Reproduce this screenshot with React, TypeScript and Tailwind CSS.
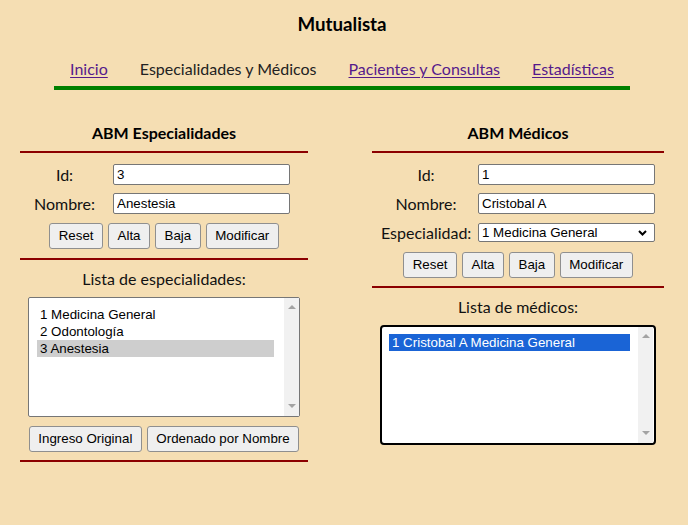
import React from "react";

const arial = "font-['Liberation_Sans',Arial,sans-serif] text-[13.33px]";

function Btn({ children }: { children: React.ReactNode }) {
  return (
    <button
      className={`${arial} h-[26px] px-[8.5px] border border-[#8f8f8f] rounded-[3px] bg-[#efefef] text-black leading-none`}
    >
      {children}
    </button>
  );
}

function TextBox({ value }: { value: string }) {
  return (
    <input
      readOnly
      value={value}
      className={`${arial} h-[21px] w-[177px] border border-[#767676] rounded-[2px] bg-white px-[3px] text-black outline-none`}
    />
  );
}

function FakeScroll() {
  return (
    <div className="w-[15px] bg-[#f1f1f1] flex flex-col justify-between items-center pt-[7px] pb-[8px]">
      <svg width="8" height="4" viewBox="0 0 8 4">
        <path d="M0 4 L4 0 L8 4Z" fill="#a3a3a3" />
      </svg>
      <svg width="8" height="4" viewBox="0 0 8 4">
        <path d="M0 0 L4 4 L8 0Z" fill="#a3a3a3" />
      </svg>
    </div>
  );
}

function Rule({ className = "" }: { className?: string }) {
  return <div className={`h-[2px] bg-[#8b0000] ${className}`} />;
}

export default function App() {
  return (
    <div className="min-h-screen w-full bg-[#f5deb3] font-['Lato',sans-serif] text-[#111]">
      <div className="w-[684px] pt-[12px]">
        <h1 className="text-center text-[18.72px] font-bold leading-[24px] text-black">Mutualista</h1>
        <div className="flex justify-center mt-[23px]">
          <nav className="flex border-b-4 border-[#008000] text-[16px] leading-[20px]">
            <a className="px-4 pb-[7px] text-[#551a8b] underline underline-offset-2">Inicio</a>
            <span className="px-4 pb-[7px] text-[#222]">Especialidades y Médicos</span>
            <a className="px-4 pb-[7px] text-[#551a8b] underline underline-offset-2">Pacientes y Consultas</a>
            <a className="px-4 pb-[7px] text-[#551a8b] underline underline-offset-2">Estadísticas</a>
          </nav>
        </div>

        <div className="flex pl-[20px] gap-[64px] mt-[33px]">
          {/* Left column */}
          <div className="w-[288px] flex flex-col">
            <h2 className="text-center text-[16px] font-bold leading-[20px] text-black">ABM Especialidades</h2>
            <Rule className="mt-[8px]" />
            <div className="mt-[11px] ml-[13px] grid grid-cols-[63px_177px] gap-x-[17px] gap-y-[8px] items-center text-[16px] leading-[21px]">
              <span className="text-center">Id:</span>
              <TextBox value="3" />
              <span className="text-center">Nombre:</span>
              <TextBox value="Anestesia" />
            </div>
            <div className="mt-[9px] flex justify-center gap-[5px]">
              <Btn>Reset</Btn>
              <Btn>Alta</Btn>
              <Btn>Baja</Btn>
              <Btn>Modificar</Btn>
            </div>
            <Rule className="mt-[9px]" />
            <div className="mt-[9px] text-center text-[16px] leading-[20px]">Lista de especialidades:</div>
            <div className="mt-[8px] mx-[8px] h-[120px] border border-[#767676] rounded-[2px] bg-white flex">
              <div className={`${arial} flex-1 pl-[8px] pt-[8px] pr-[10px] text-black`}>
                <div className="h-[17px] leading-[17px] pl-[3px]">1 Medicina General</div>
                <div className="h-[17px] leading-[17px] pl-[3px]">2 Odontología</div>
                <div className="h-[17px] leading-[17px] pl-[3px] bg-[#cecece]">3 Anestesia</div>
              </div>
              <FakeScroll />
            </div>
            <div className="mt-[9px] flex justify-center gap-[5px]">
              <Btn>Ingreso Original</Btn>
              <Btn>Ordenado por Nombre</Btn>
            </div>
            <Rule className="mt-[8px]" />
          </div>

          {/* Right column */}
          <div className="w-[292px] flex flex-col">
            <h2 className="text-center text-[16px] font-bold leading-[20px] text-black">ABM Médicos</h2>
            <Rule className="mt-[8px]" />
            <div className="mt-[11px] ml-[9px] grid grid-cols-[90px_177px] gap-x-[7px] gap-y-[8px] items-center text-[16px] leading-[21px]">
              <span className="text-center">Id:</span>
              <TextBox value="1" />
              <span className="text-center">Nombre:</span>
              <TextBox value="Cristobal A" />
              <span className="text-center">Especialidad:</span>
              <div
                className={`${arial} h-[19px] w-[177px] border border-[#767676] rounded-[2px] bg-white pl-[3px] pr-[7px] flex items-center justify-between leading-none text-black`}
              >
                <span>1 Medicina General</span>
                <svg width="9" height="6" viewBox="0 0 9 6">
                  <path d="M1 1 L4.5 4.5 L8 1" stroke="#000" strokeWidth="2" fill="none" />
                </svg>
              </div>
            </div>
            <div className="mt-[9px] flex justify-center gap-[5px]">
              <Btn>Reset</Btn>
              <Btn>Alta</Btn>
              <Btn>Baja</Btn>
              <Btn>Modificar</Btn>
            </div>
            <Rule className="mt-[8px]" />
            <div className="mt-[9px] text-center text-[16px] leading-[20px]">Lista de médicos:</div>
            <div className="mt-[8px] ml-[8px] w-[276px] h-[120px] border-2 border-black rounded-[4px] bg-white flex">
              <div className={`${arial} flex-1 pl-[7px] pt-[7px] pr-[8px] text-black`}>
                <div className="h-[17px] leading-[17px] pl-[3px] bg-[#1a64d6] text-white">
                  1 Cristobal A Medicina General
                </div>
              </div>
              <div className="mr-[1px] flex">
                <FakeScroll />
              </div>
            </div>
          </div>
        </div>
      </div>
    </div>
  );
}
